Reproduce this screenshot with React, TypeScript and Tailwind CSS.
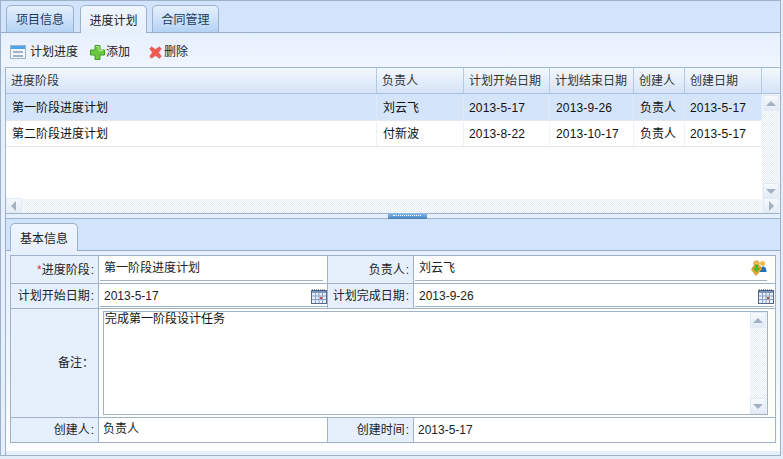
import React from "react";

const font = { fontFamily: '"Liberation Sans","Noto Sans CJK SC",sans-serif' };

const TableIcon = () => (
  <svg width="16" height="14" viewBox="0 0 16 14" className="shrink-0">
    <rect x="0.5" y="0.5" width="15" height="13" fill="#f4f8fc" stroke="#9db3c9" />
    <rect x="1" y="1" width="14" height="3" fill="#4fa3e8" />
    <rect x="3" y="6" width="10" height="2" fill="#9fb4c8" />
    <rect x="3" y="10" width="10" height="2" fill="#9fb4c8" />
  </svg>
);
const PlusIcon = () => (
  <svg width="15" height="15" viewBox="0 0 15 15" className="shrink-0">
    <path d="M5 .5h5v4.500h4.500v5H10v4.500H5V10H.5V5H5z" fill="#6cc83c" stroke="#3f9a2b" />
    <path d="M6 1.500h3v4h4" fill="none" stroke="#b6ec8c" />
  </svg>
);
const XIcon = () => (
  <svg width="13" height="13" viewBox="0 0 13 13" className="shrink-0">
    <path d="M2.500 .5 6.500 3.200 10.500 .5l2 2.200L9.800 6.500l2.700 3.800-2 2.200-4-2.700-4 2.700-2-2.200 2.700-3.800L.5 2.700z" fill="#ee5a52" stroke="#e39a96" strokeWidth="0.6" />
  </svg>
);
const CalIcon = () => (
  <svg width="16" height="15" viewBox="0 0 16 15" className="shrink-0">
    <rect x="0.500" y="1.500" width="15" height="13" fill="#e8eef8" stroke="#53688c" />
    <path d="M1 1h14" stroke="#2d3a55" strokeDasharray="1 1" />
    <rect x="1" y="2" width="14" height="2" fill="#7d94bd" />
    <path d="M4.500 4v10M8 4v10M11.500 4v10M1 7h14M1 10.500h14" stroke="#8aa0c6" />
    <rect x="9" y="8" width="2" height="2" fill="#c0504d" />
  </svg>
);
const UserIcon = () => (
  <svg width="16" height="16" viewBox="0 0 16 16" className="shrink-0">
    <circle cx="11.500" cy="3.500" r="2.500" fill="#f2b84b" />
    <path d="M8.500 12c.5-3.500 2-5.500 4-5.500s3 2.500 3 5.500z" fill="#1f6fc0" />
    <circle cx="5.500" cy="3.500" r="2.800" fill="#f4c04f" stroke="#c98a1a" strokeWidth="0.6" />
    <path d="M.5 9.500 5 15.500l6-6.500-2-3H2.500z" fill="#e9a92f" stroke="#b97e17" strokeWidth="0.6" />
    <path d="M4 4.500h3.200V8h2.300L5.500 12.500 1.700 8H4z" fill="#58b030" />
  </svg>
);

const hatch =
  "bg-[repeating-conic-gradient(#e6ecf4_0_25%,#fcfdfe_0_50%)] bg-[length:2px_2px]";

const Tab = ({ label, active, w }: { label: string; active?: boolean; w: string }) => (
  <div
    className={
      active
        ? `${w} h-[28px] -mb-px pt-[2px] flex items-center justify-center rounded-t-[5px] border border-b-0 border-[#9db2ca] bg-gradient-to-b from-[#eef5fe] to-[#e6f0fd] text-[#222]`
        : `${w} h-[27px] pt-[2px] flex items-center justify-center rounded-t-[5px] border border-b-0 border-[#9db2ca] bg-gradient-to-b from-[#e6f0fd] to-[#b4d2f4] text-[#1c3a5e]`
    }
  >
    {label}
  </div>
);

const cols = ["w-[371px]", "w-[87px]", "w-[86px]", "w-[84px]", "w-[51px]", "w-[77px]"];
const headers = ["进度阶段", "负责人", "计划开始日期", "计划结束日期", "创建人", "创建日期"];
const rows = [
  ["第一阶段进度计划", "刘云飞", "2013-5-17", "2013-9-26", "负责人", "2013-5-17"],
  ["第二阶段进度计划", "付新波", "2013-8-22", "2013-10-17", "负责人", "2013-5-17"],
];

const ScrollBtn = ({ dir }: { dir: "up" | "down" | "left" | "right" }) => {
  const p = {
    up: "M1 9 6 4l5 5z",
    down: "M1 4h10L6 9z",
    left: "M8 1v10L3 6z",
    right: "M4 1v10l5-5z",
  }[dir];
  return (
    <div className="w-[16px] h-[16px] shrink-0 flex items-center justify-center bg-gradient-to-b from-[#f6f9fd] to-[#e3ebf5] border border-[#e3eaf3]">
      <svg width="12" height="12" viewBox="0 0 12 12">
        <path d={p} fill="#a3b1c4" />
      </svg>
    </div>
  );
};

const Label = ({ children, w }: { children: React.ReactNode; w: string }) => (
  <div className={`${w} shrink-0 flex items-center justify-end pr-[4px] bg-[#e6f0fc] border-r border-[#9fb2c9] text-[#222]`}>
    {children}
    <span className="ml-[1px]">:</span>
  </div>
);

const Input = ({ children, icon, pr, pb, pt }: { children: React.ReactNode; icon?: React.ReactNode; pr: string; pb: string; pt?: string }) => (
  <div className={`flex-1 min-w-0 bg-white pl-[1px] ${pr} ${pb}`}>
    <div className={`h-full flex items-center justify-between border-b border-[#9fb2c9] pl-[4px] ${pt ?? ""}`}>
      <span>{children}</span>
      {icon}
    </div>
  </div>
);

export default function App() {
  return (
    <div
      style={font}
      className="w-[783px] h-[459px] overflow-hidden bg-[#e3edfa] text-[12px] leading-[16px] text-[#222] flex flex-col"
    >
      <div className="w-[781px] flex flex-col h-[456px] border border-[#9db2ca] bg-[#e6f0fd]">
        {/* top tabs */}
        <div className="h-[32px] shrink-0 flex items-end gap-[6px] pl-[5px] bg-[#d2e4fb] border-b border-[#97adc7]">
          <Tab label="项目信息" w="w-[68px]" />
          <Tab label="进度计划" active w="w-[67px]" />
          <div className="-ml-px">
            <Tab label="合同管理" w="w-[67px]" />
          </div>
        </div>
        {/* toolbar */}
        <div className="h-[34px] shrink-0 flex items-center pl-[9px] pt-[4px] bg-gradient-to-b from-[#e6f0fd] to-[#eff5fe]">
          <TableIcon />
          <span className="ml-[4px] w-[60px]">计划进度</span>
          <PlusIcon />
          <span className="ml-[1px] w-[43px]">添加</span>
          <XIcon />
          <span className="ml-[2px]">删除</span>
        </div>
        {/* grid */}
        <div className="ml-[4px] h-[146px] shrink-0 flex flex-col border-t border-l border-[#a1b5cc] bg-white">
          <div className="h-[26px] shrink-0 flex bg-gradient-to-b from-[#f3f8fe] to-[#d5e4f8] border-b border-[#a9c0dc]">
            {headers.map((h, i) => (
              <div key={h} className={`${cols[i]} shrink-0 flex items-center pl-[5px] border-r border-[#b5c9e0] text-[#333]`}>
                {h}
              </div>
            ))}
            <div className="flex-1" />
          </div>
          <div className="flex-1 min-h-0 flex">
            <div className="flex-1 flex flex-col">
              {rows.map((r, ri) => (
                <div
                  key={ri}
                  className={`shrink-0 flex border-b border-[#e3e8ef] ${ri === 0 ? "h-[27px] pt-[1px] bg-[#d5e5f9]" : "h-[26px] pt-[1px] bg-white"}`}
                >
                  {r.map((c, i) => (
                    <div key={i} className={`${cols[i]} shrink-0 flex items-center ${i === 2 || i === 5 ? "pl-[5px]" : "pl-[6px]"} border-r ${ri === 0 ? "border-[#dfeafa]" : "border-[#eef1f5]"} text-[#111] ${i >= 2 && i !== 4 ? "tracking-[0.15px]" : ""}`}>
                      {c}
                    </div>
                  ))}
                </div>
              ))}
            </div>
            <div className={`w-[18px] shrink-0 flex flex-col justify-between pl-[1px] pt-[1px] ${hatch}`}>
              <ScrollBtn dir="up" />
              <ScrollBtn dir="down" />
            </div>
          </div>
          <div className={`h-[14px] shrink-0 flex justify-between items-center pr-[1px] ${hatch}`}>
            <ScrollBtn dir="left" />
            <ScrollBtn dir="right" />
          </div>
        </div>
        {/* splitter */}
        <div className="h-[6px] shrink-0 flex justify-center pl-[28px] border-y border-l border-[#9db2ca] bg-[#e6f0fd] ml-[4px]">
          <div className="w-[39px] -my-px h-[6px] bg-gradient-to-b from-[#8fbbea] to-[#4f8dcc] border-b border-[#4f7fb0] flex items-center justify-center">
            <div className="w-[28px] border-t border-dotted border-white" />
          </div>
        </div>
        {/* bottom tabs */}
        <div className="ml-[4px] h-[32px] shrink-0 flex items-end pl-[4px] bg-[#d2e4fb] border-b border-l border-[#97adc7]">
          <Tab label="基本信息" active w="w-[68px]" />
        </div>
        {/* form */}
        <div className="ml-[4px] flex-1 min-h-0 border-l border-[#9db2ca] bg-[#e6f0fd] pb-[4px]">
          <div className="h-full pl-[4px] pt-[4px] bg-gradient-to-b from-[#e6f0fd] via-[#eef5fe] to-[#fdfeff]">
            <div className="w-[766px] h-[188px] border border-[#9fb2c9] bg-white flex flex-col">
              <div className="h-[28px] shrink-0 flex border-b border-[#9fb2c9]">
                <Label w="w-[88px]">
                  <span className="text-[#e6332a]">*</span>进度阶段
                </Label>
                <div className="w-[229px] shrink-0 flex border-r border-[#9fb2c9]">
                  <Input pr="pr-[4px]" pb="pb-[2px]">第一阶段进度计划</Input>
                </div>
                <Label w="w-[86px]">负责人</Label>
                <Input pr="pr-[8px]" pb="pb-[2px]" icon={<UserIcon />}>刘云飞</Input>
              </div>
              <div className="h-[25px] shrink-0 flex border-b border-[#9fb2c9]">
                <Label w="w-[88px]">计划开始日期</Label>
                <div className="w-[229px] shrink-0 flex border-r border-[#9fb2c9]">
                  <Input pr="pr-0" pb="pb-[1px]" pt="pt-[2px]" icon={<CalIcon />}>2013-5-17</Input>
                </div>
                <Label w="w-[86px]">计划完成日期</Label>
                <Input pr="pr-[1px]" pb="pb-[1px]" pt="pt-[2px]" icon={<CalIcon />}>2013-9-26</Input>
              </div>
              <div className="h-[109px] shrink-0 flex border-b border-[#9fb2c9]">
                <div className="w-[88px] shrink-0 flex items-center justify-end pr-[4px] bg-[#e6f0fc] border-r border-[#9fb2c9] text-[#222]">备注：</div>
                <div className="flex-1 min-w-0 pt-[2px] pb-[2px] pl-[4px] pr-[7px] bg-white">
                  <div className="h-full flex border border-[#9fb2c9]">
                    <div className="flex-1 pl-[1px] leading-[15px] text-[#111]">完成第一阶段设计任务</div>
                    <div className={`w-[17px] shrink-0 flex flex-col justify-between ${hatch}`}>
                      <ScrollBtn dir="up" />
                      <ScrollBtn dir="down" />
                    </div>
                  </div>
                </div>
              </div>
              <div className="flex-1 flex">
                <Label w="w-[88px]">创建人</Label>
                <div className="w-[229px] shrink-0 flex items-center pl-[4px] pb-[2px] border-r border-[#9fb2c9]">负责人</div>
                <Label w="w-[86px]">创建时间</Label>
                <div className="flex-1 flex items-center pl-[4px]">2013-5-17</div>
              </div>
            </div>
          </div>
        </div>
      </div>
    </div>
  );
}
